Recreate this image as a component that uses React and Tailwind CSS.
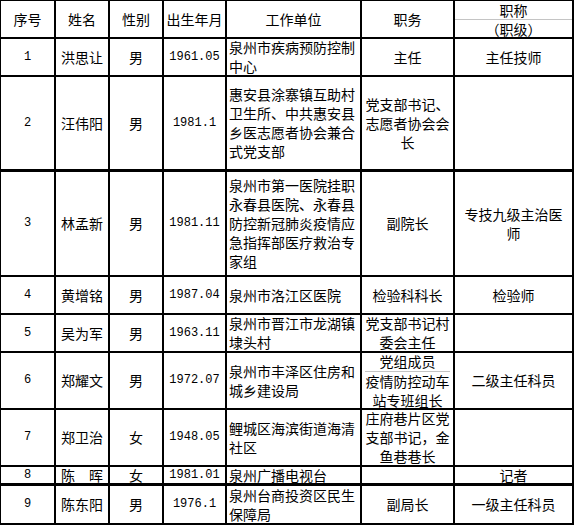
import React from 'react'

const rows = [
  { no: '1', name: '洪思让', sex: '男', birth: '1961.05', unit: '泉州市疾病预防控制中心', duty: '主任', title: '主任技师' },
  { no: '2', name: '汪伟阳', sex: '男', birth: '1981.1', unit: '惠安县涂寨镇互助村卫生所、中共惠安县乡医志愿者协会兼合式党支部', duty: '党支部书记、志愿者协会会长', title: '' },
  { no: '3', name: '林孟新', sex: '男', birth: '1981.11', unit: '泉州市第一医院挂职永春县医院、永春县防控新冠肺炎疫情应急指挥部医疗救治专家组', duty: '副院长', title: '专技九级主治医师' },
  { no: '4', name: '黄增铭', sex: '男', birth: '1987.04', unit: '泉州市洛江区医院', duty: '检验科科长', title: '检验师' },
  { no: '5', name: '吴为军', sex: '男', birth: '1963.11', unit: '泉州市晋江市龙湖镇埭头村', duty: '党支部书记村委会主任', title: '' },
  { no: '6', name: '郑耀文', sex: '男', birth: '1972.07', unit: '泉州市丰泽区住房和城乡建设局', duty: null, title: '二级主任科员' },
  { no: '7', name: '郑卫治', sex: '女', birth: '1948.05', unit: '鲤城区海滨街道海清社区', duty: '庄府巷片区党支部书记，金鱼巷巷长', title: '' },
  { no: '8', name: '陈　晖', sex: '女', birth: '1981.01', unit: '泉州广播电视台', duty: '', title: '记者', short: true },
  { no: '9', name: '陈东阳', sex: '男', birth: '1976.1', unit: '泉州台商投资区民生保障局', duty: '副局长', title: '一级主任科员', thickTop: true },
]

const cell = 'border-r-2 border-black flex items-center'

export default function App() {
  return (
    <div className="bg-white w-[578px] h-[528px] text-black text-[14px] leading-[19px] font-['Noto_Sans_CJK_SC','Noto_Sans_CJK_JP',sans-serif]">
      <div className="w-fit border-t border-l border-black grid grid-cols-[55px_54px_54px_63px_135px_93px_119px] grid-rows-[38px_38px_95px_105px_38px_38px_57px_57px_19px_39px]">
        {/* header */}
        {['序号', '姓名', '性别', '出生年月', '工作单位', '职务'].map((h) => (
          <div key={h} className={`${cell} border-b-2 justify-center text-center`}>{h}</div>
        ))}
        <div className={`${cell} border-b-2 flex-col`}>
          <div className="w-full h-[19px] border-b border-[#c4c4c4] flex items-end justify-center leading-[18px]">职称</div>
          <div className="w-full flex-1 flex items-center justify-center">（职级）</div>
        </div>

        {rows.map((r, i) => {
          const next = rows[i + 1]
          const bb = (next && next.thickTop) || i === 1 ? 'border-b-[3px]' : 'border-b-2'
          const lh = r.short ? 'leading-[16px]' : ''
          return (
            <React.Fragment key={r.no}>
              <div className={`${cell} ${bb} ${lh} justify-center font-['Liberation_Mono',monospace] text-[12px]`}>{r.no}</div>
              <div className={`${cell} ${bb} ${lh} justify-center`}>{r.name}</div>
              <div className={`${cell} ${bb} ${lh} justify-center`}>{r.sex}</div>
              <div className={`${cell} ${bb} ${lh} justify-center font-['Liberation_Mono',monospace] text-[12px]`}>{r.birth}</div>
              <div className={`${cell} ${bb} ${lh} justify-start text-left px-[2px]`}>
                <span className="w-full break-all">{r.unit}</span>
              </div>
              {r.duty === null ? (
                <div className={`${cell} ${bb} flex-col justify-center text-center px-[3px]`}>
                  <div className="w-full border-b border-[#c4c4c4]">党组成员</div>
                  <div className="w-full">疫情防控动车站专班组长</div>
                </div>
              ) : (
                <div className={`${cell} ${bb} ${lh} justify-center text-center px-[3px]`}>
                  <span className="w-full">{r.duty}</span>
                </div>
              )}
              <div className={`${cell} ${bb} ${lh} justify-center text-center px-[4px]`}>
                <span className="w-full">{r.title}</span>
              </div>
            </React.Fragment>
          )
        })}
      </div>
    </div>
  )
}
